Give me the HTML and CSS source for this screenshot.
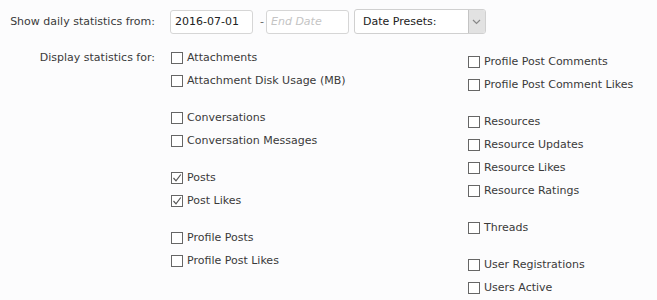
FILE: index.html
```html
<!DOCTYPE html>
<html lang="en">
<head>
  <meta charset="UTF-8">
  <title>Daily Statistics</title>
  <link rel="stylesheet" href="styles.css">
</head>
<body>
  <form class="stats-form">
    <dl class="row">
      <dt>Show daily statistics from:</dt>
      <dd class="controls">
        <input type="text" class="date" value="2016-07-01">
        <span class="dash">-</span>
        <input type="text" class="date" placeholder="End Date">
        <div class="select">
          <span>Date Presets:</span>
          <span class="arrow">
            <svg width="9" height="6" viewBox="0 0 9 6"><path d="M1 1 L4.5 4.5 L8 1" fill="none" stroke="#888" stroke-width="1.2"/></svg>
          </span>
        </div>
      </dd>
    </dl>
    <dl class="row">
      <dt class="tall">Display statistics for:</dt>
      <dd class="columns">
        <ul class="col">
          <li class="grp">
            <label><span class="box"></span>Attachments</label>
            <label><span class="box"></span>Attachment Disk Usage (MB)</label>
          </li>
          <li class="grp">
            <label><span class="box"></span>Conversations</label>
            <label><span class="box"></span>Conversation Messages</label>
          </li>
          <li class="grp">
            <label><span class="box checked"><svg width="10" height="10" viewBox="0 0 10 10"><path d="M1.5 5 L4 7.8 L8.8 1.5" fill="none" stroke="#555" stroke-width="1.2"/></svg></span>Posts</label>
            <label><span class="box checked"><svg width="10" height="10" viewBox="0 0 10 10"><path d="M1.5 5 L4 7.8 L8.8 1.5" fill="none" stroke="#555" stroke-width="1.2"/></svg></span>Post Likes</label>
          </li>
          <li class="grp">
            <label><span class="box"></span>Profile Posts</label>
            <label><span class="box"></span>Profile Post Likes</label>
          </li>
        </ul>
        <ul class="col second">
          <li class="grp">
            <label><span class="box"></span>Profile Post Comments</label>
            <label><span class="box"></span>Profile Post Comment Likes</label>
          </li>
          <li class="grp">
            <label><span class="box"></span>Resources</label>
            <label><span class="box"></span>Resource Updates</label>
            <label><span class="box"></span>Resource Likes</label>
            <label><span class="box"></span>Resource Ratings</label>
          </li>
          <li class="grp">
            <label><span class="box"></span>Threads</label>
          </li>
          <li class="grp">
            <label><span class="box"></span>User Registrations</label>
            <label><span class="box"></span>Users Active</label>
          </li>
        </ul>
      </dd>
    </dl>
  </form>
</body>
</html>
```

FILE: styles.css
```css
body {
  margin: 0;
  background-color: #fcfcfd;
  color: #3a3a3a;
  font-family: "DejaVu Sans", Verdana, sans-serif;
  font-size: 11px;
}
.stats-form {
  padding-top: 9px;
}
.row {
  display: grid;
  grid-template-columns: 155px 1fr;
  column-gap: 15px;
  margin: 0 0 12px 0;
}
dt {
  text-align: right;
  line-height: 25px;
}
dt.tall {
  line-height: 23px;
}
dd {
  margin: 0;
}
.controls {
  display: flex;
  align-items: center;
  height: 25px;
}
.date {
  box-sizing: border-box;
  width: 83px;
  height: 24px;
  border: 1px solid #d6d6d6;
  border-radius: 3px;
  background: #ffffff;
  padding: 0 4px;
  margin: 0;
  font-family: inherit;
  font-size: 11px;
  color: #222222;
  outline: none;
}
.date::placeholder {
  color: #c4c4c4;
  font-style: italic;
}
.dash {
  margin: 0 2px 0 7px;
  color: #666666;
}
.select {
  box-sizing: border-box;
  display: flex;
  align-items: center;
  justify-content: space-between;
  width: 132px;
  height: 25px;
  margin-left: 5px;
  padding-left: 8px;
  border: 1px solid #d0d0d0;
  border-radius: 3px;
  background: #ffffff;
  color: #222222;
}
.arrow {
  display: flex;
  align-items: center;
  justify-content: center;
  width: 16px;
  height: 23px;
  background: #e2e2e2;
  border-left: 1px solid #c4c4c4;
  border-radius: 0 2px 2px 0;
}
.columns {
  display: flex;
  padding-left: 1px;
}
.col {
  list-style: none;
  margin: 0;
  padding: 0;
  width: 297px;
}
.col.second {
  width: auto;
  padding-top: 4px;
}
.grp {
  margin-bottom: 14px;
}
.grp:last-child {
  margin-bottom: 0;
}
label {
  display: flex;
  align-items: center;
  height: 23px;
  cursor: pointer;
}
.box {
  box-sizing: border-box;
  display: flex;
  align-items: center;
  justify-content: center;
  width: 12px;
  height: 12px;
  margin-right: 4px;
  border: 1px solid #666666;
  background: #ffffff;
}
```
